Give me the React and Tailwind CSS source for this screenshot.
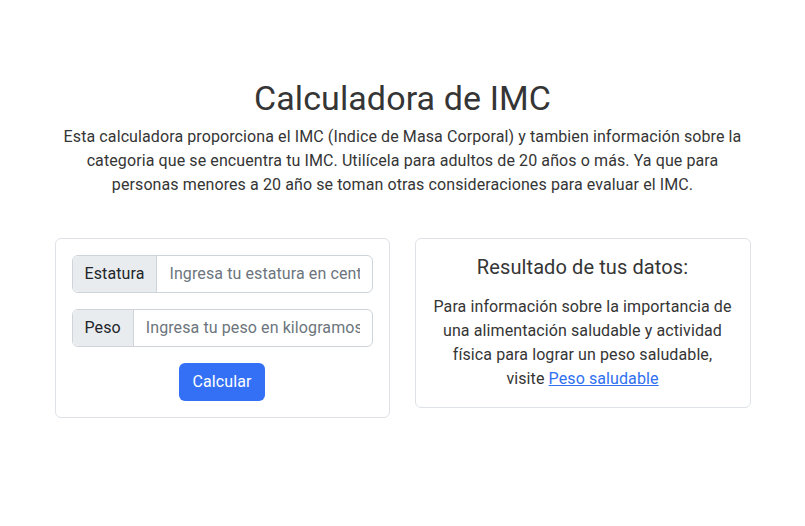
import React, { useState } from "react";

const App = () => {
  const [estatura, setEstatura] = useState("");
  const [peso, setPeso] = useState("");

  return (
    <div className="min-h-[526px] bg-white text-[#353535] font-['Roboto',sans-serif] tracking-[0.1px]">
      <div className="mx-auto w-[720px] px-3 pt-[79px]">
        <h1 className="text-center text-[34px] leading-[38px] font-normal mb-[8px]">
          Calculadora de IMC
        </h1>
        <p className="text-center text-[16px] leading-6 px-2">
          Esta calculadora proporciona el IMC (Indice de Masa Corporal) y tambien
          información sobre la categoria que se encuentra tu IMC. Utilícela para
          adultos de 20 años o más. Ya que para personas menores a 20 año se toman
          otras consideraciones para evaluar el IMC.
        </p>

        <div className="mt-[41px] flex items-start gap-[25px]">
          <div className="w-[335px] rounded-md border border-[#dee2e6] p-4">
            <div className="flex h-[38px] rounded-md border border-[#ced4da]">
              <span className="flex items-center bg-[#e9ecef] px-3 border-r border-[#ced4da] rounded-l-md text-[#212529]">
                Estatura
              </span>
              <input
                className="min-w-0 flex-1 px-3 outline-none rounded-r-md placeholder:text-[#6c757d]"
                placeholder="Ingresa tu estatura en centimetros"
                value={estatura}
                onChange={(e) => setEstatura(e.target.value)}
              />
            </div>
            <div className="mt-4 flex h-[38px] rounded-md border border-[#ced4da]">
              <span className="flex items-center bg-[#e9ecef] px-3 border-r border-[#ced4da] rounded-l-md text-[#212529]">
                Peso
              </span>
              <input
                className="min-w-0 flex-1 px-3 outline-none rounded-r-md placeholder:text-[#6c757d]"
                placeholder="Ingresa tu peso en kilogramos"
                value={peso}
                onChange={(e) => setPeso(e.target.value)}
              />
            </div>
            <div className="mt-4 flex justify-center">
              <button className="h-[38px] rounded-md bg-[#3370f5] px-[13px] text-white">
                Calcular
              </button>
            </div>
          </div>

          <div className="w-[336px] rounded-md border border-[#dee2e6] p-4 text-center">
            <h5 className="text-[20px] leading-6 mb-4">Resultado de tus datos:</h5>
            <p className="leading-6">
              Para información sobre la importancia de una alimentación saludable
              y actividad física para lograr un peso saludable,
              <br />
              visite{" "}
              <a href="#" className="text-[#2f6ff0] underline">
                Peso saludable
              </a>
            </p>
          </div>
        </div>
      </div>
    </div>
  );
};

export default App;
